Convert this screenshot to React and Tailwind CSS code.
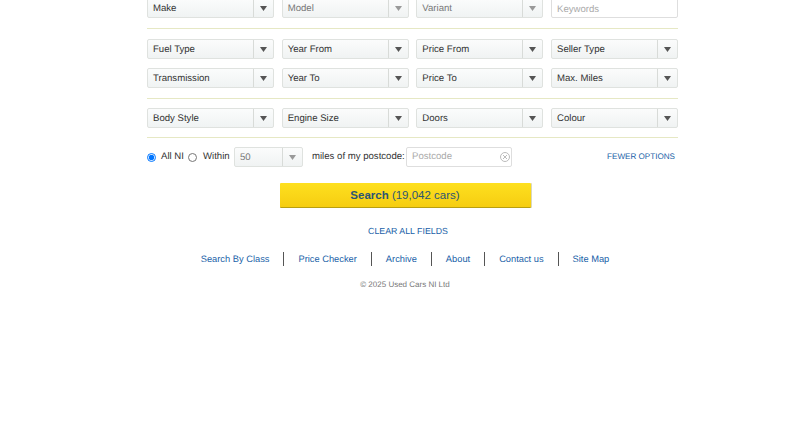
import React from 'react';

const Select = ({ label, disabled, className = 'w-full' }) => (
    <div className={`${className} h-[20px] flex items-stretch rounded-[2px] border border-[#dfe2df] bg-gradient-to-b from-[#fbfcfc] to-[#f0f3f3] text-[9.6px] leading-[20px] ${disabled ? 'text-[#777]' : 'text-[#333]'}`}>
        <span className="flex-1 pl-[5px] truncate">{label}</span>
        <span className="w-[20px] flex items-center justify-center border-l border-[#d8dbd8]">
            <svg width="7" height="5" viewBox="0 0 7 5"><path d="M0 0h7L3.5 5z" fill={disabled ? '#999' : '#555'} /></svg>
        </span>
    </div>
);

const Row = ({ children }) => <div className="grid grid-cols-4 gap-x-[7.67px]">{children}</div>;
const Divider = ({ className }) => <div className={`h-[1px] bg-[#e6e8c4] ${className}`} />;

const links = ['Search By Class', 'Price Checker', 'Archive', 'About', 'Contact us', 'Site Map'];

const App = () => {
    return (
        <div className="min-h-[424px] bg-white overflow-hidden font-['Liberation_Sans',Arial,sans-serif] [text-rendering:geometricPrecision]">
            <div className="w-[531px] ml-[147px] -mt-[2px]">
                <Row>
                    <Select label="Make" />
                    <Select label="Model" disabled />
                    <Select label="Variant" disabled />
                    <div className="h-[20px] border border-[#dedede] rounded-[2px] bg-white pl-[5px] text-[9.6px] leading-[21px] text-[#aaa]">Keywords</div>
                </Row>
                <Divider className="mt-[10px] mb-[10px]" />
                <Row>
                    <Select label="Fuel Type" />
                    <Select label="Year From" />
                    <Select label="Price From" />
                    <Select label="Seller Type" />
                </Row>
                <div className="h-[9px]" />
                <Row>
                    <Select label="Transmission" />
                    <Select label="Year To" />
                    <Select label="Price To" />
                    <Select label="Max. Miles" />
                </Row>
                <Divider className="mt-[10px] mb-[9px]" />
                <Row>
                    <Select label="Body Style" />
                    <Select label="Engine Size" />
                    <Select label="Doors" />
                    <Select label="Colour" />
                </Row>
                <Divider className="mt-[9px] mb-[9px]" />
                <div className="flex items-center h-[20px] text-[9.6px] text-[#333] whitespace-nowrap">
                    <input type="radio" name="area" defaultChecked className="w-[9px] h-[9px] m-0 accent-[#0075ff]" />
                    <span className="ml-[5px] w-[27px]">All NI</span>
                    <input type="radio" name="area" className="w-[9px] h-[9px] m-0" />
                    <span className="ml-[6px] w-[31px]">Within</span>
                    <Select label="50" disabled className="w-[69px]" />
                    <span className="ml-[9px] w-[94px]">miles of my postcode:</span>
                    <div className="w-[106px] h-[20px] flex items-center justify-between border border-[#dedede] rounded-[2px] pl-[5px] pr-[1px] text-[#aaa]">
                        <span className="pt-[1px]">Postcode</span>
                        <svg width="10" height="10" viewBox="0 0 10 10" fill="none" stroke="#bbb"><circle cx="5" cy="5" r="4.5" /><path d="M3 3l4 4M7 3l-4 4" /></svg>
                    </div>
                    <a className="ml-auto mr-[3px] text-[8.1px] text-[#1a5fa8]">FEWER OPTIONS</a>
                </div>
                <div className="w-[516px]">
                    <div className="flex justify-center mt-[16px]">
                        <button className="w-[251px] h-[25px] pt-[1px] rounded-[1px] border-b border-[#b89f10] shadow-[1px_0_0_#d8d8c0] bg-gradient-to-b from-[#fee01f] to-[#f6cd10] text-[11.5px] text-[#2c5573]">
                            <b>Search</b> (19,042 cars)
                        </button>
                    </div>
                    <div className="text-center pl-[6px] mt-[17px] text-[8.8px] leading-[13px] text-[#1a5fa8]">CLEAR ALL FIELDS</div>
                    <div className="flex justify-center mt-[14px] text-[9.3px] leading-[14px] text-[#1a5fa8]">
                        {links.map((l, i) => (
                            <span key={l} className={i < links.length - 1 ? 'pr-[14px] mr-[14px] border-r border-[#555]' : ''}>{l}</span>
                        ))}
                    </div>
                    <div className="text-center mt-[13px] text-[8px] leading-[12px] text-[#777]">© 2025 Used Cars NI Ltd</div>
                </div>
            </div>
        </div>
    );
};

export default App;
